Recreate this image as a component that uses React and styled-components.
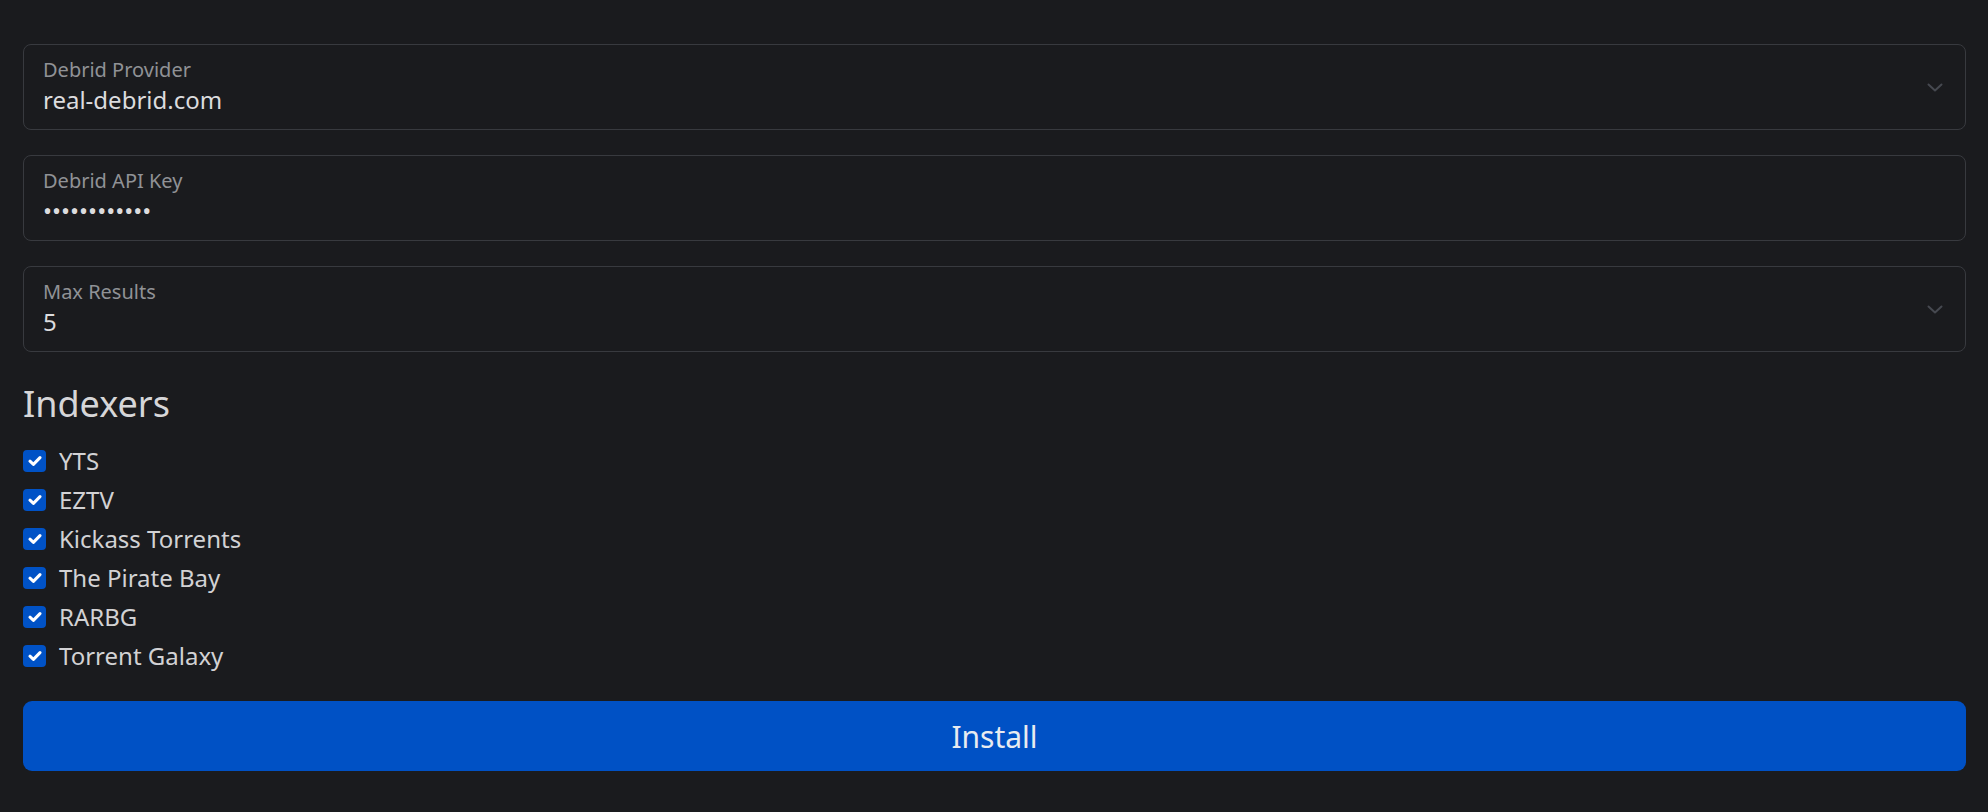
import styled, { createGlobalStyle } from "styled-components";

const GlobalStyle = createGlobalStyle`
  html, body {
    margin: 0;
    padding: 0;
    background: #1a1b1e;
  }
  body {
    font-family: "Noto Sans", "Open Sans", sans-serif;
    color: #c9cacd;
  }
`;

const Page = styled.div`
  min-height: 812px;
  box-sizing: border-box;
  padding: 44px 22px 40px 23px;
  display: flex;
  flex-direction: column;
`;

const Fields = styled.div`
  display: flex;
  flex-direction: column;
  gap: 25px;
`;

const Field = styled.div`
  display: flex;
  align-items: center;
  height: 86px;
  box-sizing: border-box;
  border: 1px solid #383a3f;
  border-radius: 8px;
  padding: 13px 22px 12px 19px;
`;

const FieldBody = styled.div`
  flex: 1;
  display: flex;
  flex-direction: column;
  align-self: flex-start;
`;

const Label = styled.label`
  font-size: 20px;
  line-height: 24px;
  color: #909296;
`;

const Value = styled.div`
  font-size: 24px;
  line-height: 35px;
  color: #dcdcde;
`;

const Secret = styled.input`
  appearance: none;
  background: transparent;
  border: none;
  outline: none;
  padding: 0;
  margin: 0;
  font-family: inherit;
  font-size: 24px;
  line-height: 35px;
  height: 35px;
  color: #dcdcde;
  width: 100%;
`;

const Chevron = styled.svg`
  width: 16px;
  height: 9px;
  flex: none;
`;

const Heading = styled.h2`
  margin: 30px 0 15px;
  font-size: 36px;
  line-height: 44px;
  font-weight: 400;
  color: #d6d6d8;
`;

const List = styled.div`
  display: flex;
  flex-direction: column;
`;

const Row = styled.label`
  display: flex;
  align-items: center;
  gap: 13px;
  height: 39px;
  font-size: 24px;
  color: #d2d2d4;
`;

const Box = styled.span`
  width: 23px;
  height: 22px;
  border-radius: 4px;
  background: ${(p) => (p.checked ? "#0052c6" : "transparent")};
  border: ${(p) => (p.checked ? "none" : "1px solid #383a3f")};
  display: flex;
  align-items: center;
  justify-content: center;
`;

const InstallButton = styled.button`
  margin-top: 26px;
  height: 70px;
  border: none;
  border-radius: 9px;
  background: #0051c5;
  color: #e8ebf0;
  font-family: inherit;
  font-size: 30px;
  cursor: pointer;
`;

const ChevronIcon = () => (
  <Chevron viewBox="0 0 16 9">
    <polyline
      points="1.5,1.5 8,7.5 14.5,1.5"
      fill="none"
      stroke="#464950"
      strokeWidth="2"
      strokeLinecap="round"
      strokeLinejoin="round"
    />
  </Chevron>
);

const Check = () => (
  <svg width="14" height="12" viewBox="0 0 14 12">
    <polyline
      points="2,6.2 5.4,9.4 12,2.6"
      fill="none"
      stroke="#ffffff"
      strokeWidth="3"
      strokeLinecap="round"
      strokeLinejoin="round"
    />
  </svg>
);

const indexers = [
  "YTS",
  "EZTV",
  "Kickass Torrents",
  "The Pirate Bay",
  "RARBG",
  "Torrent Galaxy",
];

const App = () => {
  return (
    <>
      <GlobalStyle />
      <Page>
        <Fields>
          <Field>
            <FieldBody>
              <Label>Debrid Provider</Label>
              <Value>real-debrid.com</Value>
            </FieldBody>
            <ChevronIcon />
          </Field>
          <Field>
            <FieldBody>
              <Label>Debrid API Key</Label>
              <Secret type="password" value="abcdefghijkl" readOnly />
            </FieldBody>
          </Field>
          <Field>
            <FieldBody>
              <Label>Max Results</Label>
              <Value>5</Value>
            </FieldBody>
            <ChevronIcon />
          </Field>
        </Fields>

        <Heading>Indexers</Heading>
        <List>
          {indexers.map((name) => (
            <Row key={name}>
              <Box checked>
                <Check />
              </Box>
              {name}
            </Row>
          ))}
        </List>

        <InstallButton>Install</InstallButton>
      </Page>
    </>
  );
};

export default App;
